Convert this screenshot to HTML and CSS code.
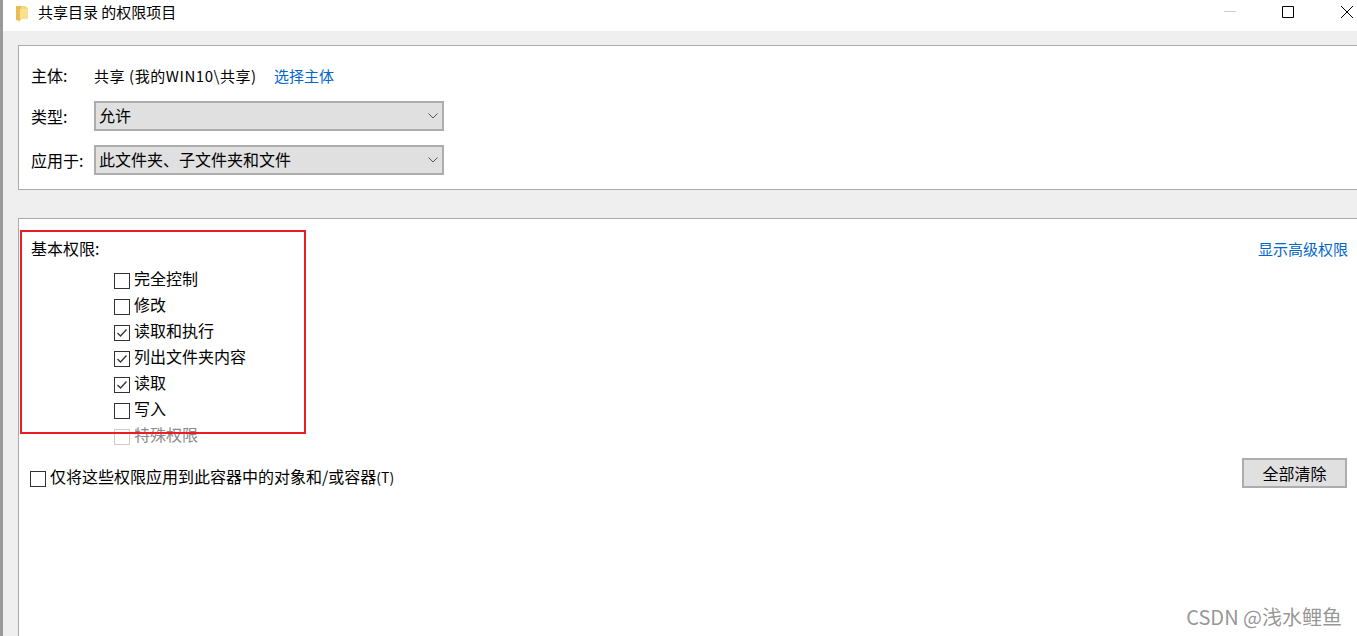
FILE: index.html
```html
<!DOCTYPE html>
<html lang="zh-CN">
<head>
    <meta charset="UTF-8">
    <meta name="viewport" content="width=device-width, initial-scale=1.0">
    <title>共享目录 的权限项目</title>
    <link rel="stylesheet" href="styles.css">
</head>
<body>
    <div class="chuangkou">
        <div class="titlebar">
            <svg class="folder" width="12" height="16" viewBox="0 0 12 16">
                <path d="M0 0H9L12 2V13H4V16L0 14Z" fill="#f5d77c"/>
                <path d="M0 0H5V14L0 14Z" fill="#e9bd55"/>
                <path d="M4 3H12V13H4Z" fill="#fbe08e"/>
            </svg>
            <span class="title">共享目录 的权限项目</span>
            <div class="controls">
                <svg class="ctl" width="12" height="12" viewBox="0 0 12 12"><path d="M0 5.5H12" stroke="#cccccc" fill="none"/></svg>
                <svg class="ctl" width="12" height="12" viewBox="0 0 12 12"><path d="M.5 .5H11.5V11.5H.5Z" stroke="#000" fill="none"/></svg>
                <svg class="ctl" width="12" height="12" viewBox="0 0 12 12"><path d="M0 0L12 12M12 0L0 12" stroke="#000" fill="none"/></svg>
            </div>
        </div>

        <div class="content">
            <div class="panel top">
                <div class="row first">
                    <span class="lbl">主体:</span>
                    <span class="val">共享 (我的WIN10\共享)</span>
                    <a class="link" href="#">选择主体</a>
                </div>
                <div class="row">
                    <span class="lbl">类型:</span>
                    <div class="select">
                        <span>允许</span>
                        <svg width="10" height="6" viewBox="0 0 10 6"><path d="M.5 .5L5 5L9.5 .5" stroke="#555" fill="none"/></svg>
                    </div>
                </div>
                <div class="row">
                    <span class="lbl">应用于:</span>
                    <div class="select">
                        <span>此文件夹、子文件夹和文件</span>
                        <svg width="10" height="6" viewBox="0 0 10 6"><path d="M.5 .5L5 5L9.5 .5" stroke="#555" fill="none"/></svg>
                    </div>
                </div>
            </div>

            <div class="panel bottom">
                <div class="head">
                    <span class="heading">基本权限:</span>
                    <a class="link" href="#">显示高级权限</a>
                </div>
                <ul class="perms">
                    <li><span class="box"></span>完全控制</li>
                    <li><span class="box"></span>修改</li>
                    <li><span class="box"><svg width="14" height="14" viewBox="0 0 14 14"><path d="M2.5 7L5.5 10L11.5 3.5" stroke="#333" stroke-width="1.3" fill="none"/></svg></span>读取和执行</li>
                    <li><span class="box"><svg width="14" height="14" viewBox="0 0 14 14"><path d="M2.5 7L5.5 10L11.5 3.5" stroke="#333" stroke-width="1.3" fill="none"/></svg></span>列出文件夹内容</li>
                    <li><span class="box"><svg width="14" height="14" viewBox="0 0 14 14"><path d="M2.5 7L5.5 10L11.5 3.5" stroke="#333" stroke-width="1.3" fill="none"/></svg></span>读取</li>
                    <li><span class="box"></span>写入</li>
                    <li class="off"><span class="box"></span>特殊权限</li>
                </ul>
                <div class="foot">
                    <div class="apply"><span class="box"></span><span>仅将这些权限应用到此容器中的对象和/或容器<span class="key">(T)</span></span></div>
                    <button class="buton" type="button">全部清除</button>
                </div>
            </div>
        </div>
    </div>

    <div class="redbox"></div>
    <div class="watermark">CSDN @浅水鲤鱼</div>
</body>
</html>
```

FILE: styles.css
```css
html, body {
    margin: 0;
    height: 100%;
    overflow: hidden;
}
body {
    font-family: "Noto Sans CJK SC", "Liberation Sans", sans-serif;
    font-size: 16px;
    color: #000;
    background-color: white;
}
.chuangkou {
    display: flex;
    flex-direction: column;
    height: 636px;
    border-left: 3px solid #9a9a9a;
}
.titlebar {
    display: flex;
    align-items: center;
    height: 31px;
    flex: none;
    background-color: white;
}
.folder {
    margin-left: 13px;
    margin-top: -4px;
}
.title {
    margin-left: 10px;
    margin-top: -7px;
    font-size: 15px;
    line-height: 20px;
}
.controls {
    display: flex;
    gap: 46px;
    margin-left: auto;
    margin-right: 4px;
    margin-top: -7px;
}
.ctl {
    display: block;
}
.controls .ctl + .ctl + .ctl {
    margin-left: 1px;
}
.content {
    flex: 1;
    display: flex;
    flex-direction: column;
    padding: 14px 0 0 15px;
    background-color: #efefef;
    min-height: 0;
}
.panel {
    background-color: white;
    border: 1px solid #aaaaaa;
    border-right: none;
}
.top {
    height: 143px;
    margin-bottom: 28px;
    padding-left: 12px;
}
.bottom {
    flex: 1;
    border-bottom: none;
    padding-left: 12px;
    padding-right: 9px;
}
.row {
    display: flex;
    align-items: center;
    margin-bottom: 14px;
}
.first {
    height: 20px;
    margin-top: 19px;
    margin-bottom: 16px;
}
.lbl {
    width: 63px;
    flex: none;
}
.val {
    font-size: 15px;
    letter-spacing: 0.55px;
    width: 180px;
}
.link {
    font-size: 15px;
    color: #0066cc;
    text-decoration: none;
}
.select {
    display: flex;
    align-items: center;
    justify-content: space-between;
    box-sizing: border-box;
    width: 350px;
    height: 30px;
    padding: 0 4px 0 3px;
    border: 2px solid #adadad;
    background-color: #e0e0e0;
}
.select span {
    margin-top: -3px;
}
.head {
    display: flex;
    justify-content: space-between;
    align-items: center;
    height: 22px;
    margin-top: 18px;
}
.heading {
    line-height: 22px;
}
.perms {
    list-style: none;
    margin: 6px 0 0 83px;
    padding: 0;
}
.perms li {
    display: flex;
    align-items: center;
    gap: 4px;
    height: 26px;
}
.perms .box {
    margin-top: 6px;
}
.box {
    display: flex;
    align-items: center;
    justify-content: center;
    box-sizing: border-box;
    width: 16px;
    height: 16px;
    flex: none;
    border: 1px solid #333333;
    background-color: white;
}
.off {
    color: #8a8a8a;
}
.off .box {
    border-color: #cccccc;
}
.foot {
    display: flex;
    justify-content: space-between;
    align-items: flex-start;
    margin-top: 11px;
    margin-left: -1px;
}
.apply {
    display: flex;
    align-items: center;
    gap: 4px;
    height: 26px;
    margin-top: 5px;
}
.apply .box {
    margin-top: 6px;
}
.key {
    font-size: 14px;
}
.buton {
    width: 105px;
    height: 30px;
    margin-right: 1px;
    font-family: inherit;
    font-size: 16px;
    color: black;
    background-color: #e0e0e0;
    border: 2px solid #adadad;
    padding: 0;
}
.redbox {
    position: absolute;
    left: 20px;
    top: 230px;
    width: 282px;
    height: 200px;
    border: 2px solid #ed1c24;
}
.watermark {
    position: absolute;
    right: 15px;
    top: 603px;
    font-size: 20px;
    line-height: 27px;
    color: rgba(90, 90, 90, 0.65);
}
```
